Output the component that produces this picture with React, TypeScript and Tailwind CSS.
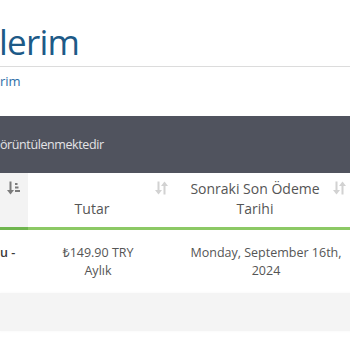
import React from 'react'

function SortAmountIcon() {
  return (
    <svg width="13" height="14" viewBox="0 0 13 14" fill="#7b7b7b">
      <rect x="2.5" y="0.5" width="2" height="10" />
      <path d="M0 9 L7 9 L3.5 13.5 Z" />
      <rect x="8" y="2" width="2.5" height="2" />
      <rect x="8" y="5.5" width="3.5" height="2" />
      <rect x="8" y="9" width="5" height="2" />
    </svg>
  )
}

function SortIcon() {
  return (
    <svg width="13" height="14" viewBox="0 0 13 14" fill="#d2d2d2">
      <rect x="2.5" y="0.5" width="2" height="10" />
      <path d="M0 9 L7 9 L3.5 13.5 Z" />
      <rect x="8.5" y="3.5" width="2" height="10" />
      <path d="M6 5 L13 5 L9.5 0.5 Z" />
    </svg>
  )
}

export default function App() {
  return (
    <div
      className="w-[350px] h-[350px] overflow-hidden bg-white"
      style={{ fontFamily: "'Open Sans', 'Noto Sans', sans-serif" }}
    >
      <div className="w-[360px]">
        <div className="pt-[24px] pb-[7px] border-b border-[#dcdcdc]">
          <h1 className="text-[35px] leading-none text-[#1d5a87] tracking-[-0.8px] -ml-[1px]">lerim</h1>
        </div>
        <div className="mt-[5px] text-[13px] leading-[18px] text-[#2f6fa8]">rim</div>

        <div className="mt-[26px] h-[57px] bg-[#50535e] flex items-center pt-[2px]">
          <span className="text-[12.5px] tracking-[-0.4px] text-[#e4e4e6]">örüntülenmektedir</span>
        </div>

        <div className="flex border-b-[3px] border-[#8cc965] text-[14px] leading-[20px] text-[#555]">
          <div className="relative w-[28px] h-[54px] bg-[#f3f3f3] shrink-0 -mb-[3px] border-b-[3px] border-[#6fb54e] box-content">
            <span className="absolute top-[8px] right-[8px]">
              <SortAmountIcon />
            </span>
          </div>
          <div className="relative w-[150px] h-[54px] shrink-0 flex items-end justify-center pl-[8px] pr-[30px] pb-[8px] text-center">
            Tutar
            <span className="absolute top-[8px] right-[10px]">
              <SortIcon />
            </span>
          </div>
          <div className="relative w-[176px] h-[54px] shrink-0 flex items-end justify-center pl-[8px] pr-[30px] pb-[8px] text-center">
            <span>
              Sonraki Son Ödeme
              <br />
              Tarihi
            </span>
            <span className="absolute top-[8px] right-[8px]">
              <SortIcon />
            </span>
          </div>
        </div>

        <div className="flex h-[62px] text-[12.5px] leading-[18px] text-[#555]">
          <div className="w-[28px] shrink-0 pt-[14px] font-semibold text-[#3a3a3a] whitespace-nowrap">u -</div>
          <div className="w-[150px] shrink-0 pt-[14px] pl-[4px] pr-[14px] text-center">
            ₺149.90 TRY
            <br />
            Aylık
          </div>
          <div className="w-[176px] shrink-0 pt-[14px] px-[4px] text-center">
            Monday, September 16th,
            <br />
            2024
          </div>
        </div>

        <div className="mt-[1px] h-[38px] bg-[#f4f4f4] shadow-[0_0_3px_rgba(0,0,0,0.04)]" />
      </div>
    </div>
  )
}
